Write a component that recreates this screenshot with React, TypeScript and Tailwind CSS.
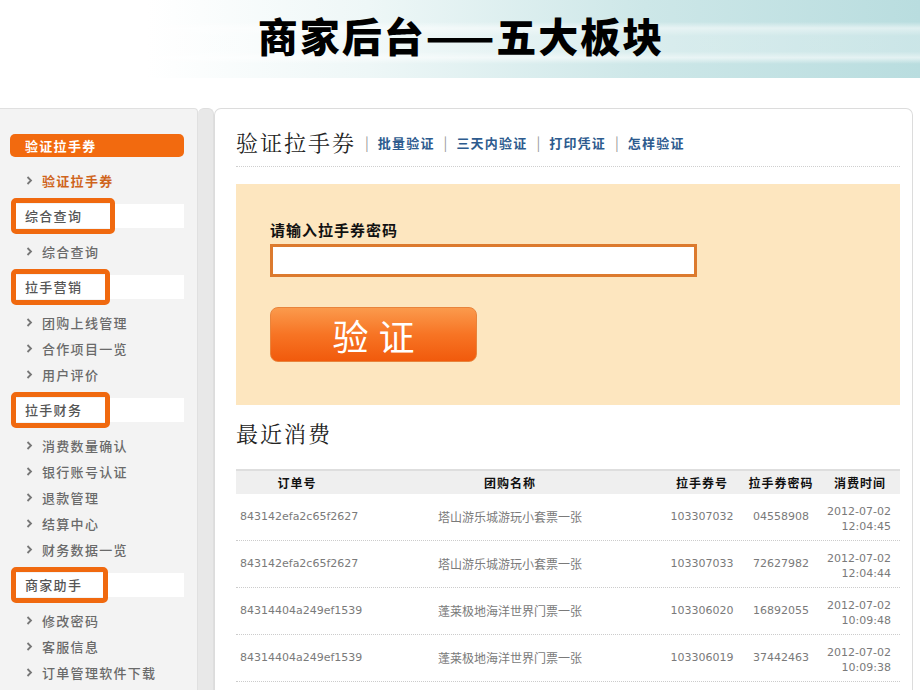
import React from "react";

const CJK = "font-['Noto_Sans_CJK_SC','Noto_Sans',sans-serif]";
const SERIF = "font-['Noto_Serif_CJK_SC','Noto_Sans_CJK_SC',serif]";
const NUM = "font-['DejaVu_Sans','Noto_Sans_CJK_SC',sans-serif]";

function Chevron() {
  return (
    <svg width="7" height="9" viewBox="0 0 7 9" className="shrink-0">
      <path d="M1.5 1 L5 4.5 L1.5 8" fill="none" stroke="#777" strokeWidth="1.8" />
    </svg>
  );
}

function Item({ label, active }: { label: string; active?: boolean }) {
  return (
    <div className="h-[26px] flex items-center pl-[26px] gap-[9px]">
      <Chevron />
      <span
        className={
          "text-[13px] tracking-[1.3px] leading-none " +
          (active ? "text-[#cf641c] font-bold" : "text-[#6a6a6a] font-medium")
        }
      >
        {label}
      </span>
    </div>
  );
}

function Section({ label, boxW }: { label: string; boxW: number }) {
  return (
    <div className="h-[45px] relative flex items-center">
      <div className="ml-[12px] w-[172px] h-[24px] bg-white flex items-center pl-[13px]">
        <span className="text-[13px] tracking-[1.3px] text-[#555] font-medium leading-none">{label}</span>
      </div>
      <div
        className="absolute left-[11px] top-[5px] h-[36px] border-[5px] border-[#f0690f] rounded-[5px]"
        style={{ width: boxW }}
      />
    </div>
  );
}

const rows = [
  ["843142efa2c65f2627", "塔山游乐城游玩小套票一张", "103307032", "04558908", "2012-07-02", "12:04:45"],
  ["843142efa2c65f2627", "塔山游乐城游玩小套票一张", "103307033", "72627982", "2012-07-02", "12:04:44"],
  ["84314404a249ef1539", "蓬莱极地海洋世界门票一张", "103306020", "16892055", "2012-07-02", "10:09:48"],
  ["84314404a249ef1539", "蓬莱极地海洋世界门票一张", "103306019", "37442463", "2012-07-02", "10:09:38"],
];

const cols = "grid grid-cols-[122px_304px_80px_78px_80px]";

export default function App() {
  return (
    <div className={"w-[920px] h-[690px] overflow-hidden bg-white " + CJK}>
      <header className="h-[78px] flex items-center justify-center pb-[8px] bg-[linear-gradient(to_bottom,rgba(255,255,255,0)_0%,rgba(255,255,255,0)_28%,rgba(255,255,255,0.55)_36%,rgba(255,255,255,0.25)_46%,rgba(255,255,255,0.25)_66%,rgba(255,255,255,0.6)_74%,rgba(255,255,255,0)_82%),linear-gradient(to_right,#ffffff_0%,#ffffff_16%,#eef7f7_40%,#cde7e8_70%,#b9dddf_100%)]">
        <h1 className="text-[40px] font-black text-black leading-none tracking-[2px] pl-[2px]">商家后台——五大板块</h1>
      </header>
      <div className="h-[30px]" />
      <div className="flex h-[582px]">
        <aside className="w-[198px] bg-[#f3f3f3] border-t border-r border-[#e0e0e0] rounded-tr-[4px] pt-[14px]">
          <div className="h-[44px] flex items-center">
            <div className="ml-[10px] w-[174px] h-[23px] bg-[#f26a0f] rounded-[5px] flex items-center pl-[15px]">
              <span className="text-[13px] tracking-[1.3px] text-white font-bold leading-none">验证拉手券</span>
            </div>
          </div>
          <Item label="验证拉手券" active />
          <Section label="综合查询" boxW={104} />
          <Item label="综合查询" />
          <Section label="拉手营销" boxW={99} />
          <Item label="团购上线管理" />
          <Item label="合作项目一览" />
          <Item label="用户评价" />
          <Section label="拉手财务" boxW={99} />
          <Item label="消费数量确认" />
          <Item label="银行账号认证" />
          <Item label="退款管理" />
          <Item label="结算中心" />
          <Item label="财务数据一览" />
          <Section label="商家助手" boxW={97} />
          <Item label="修改密码" />
          <Item label="客服信息" />
          <Item label="订单管理软件下载" />
        </aside>
        <div className="w-[16px] bg-[#e8e8e8] border-t border-r border-[#dedede] rounded-t-[6px]" />
        <main className="w-[699px] bg-white border-t border-l border-r border-[#dcdcdc] rounded-t-[7px] pl-[21px] pr-[12px]">
          <div className="pt-[18px] pb-[9px] border-b border-dotted border-[#cfcfcf] w-[664px]">
            <div className="h-[30px] flex items-center">
              <span className={"text-[22px] tracking-[2px] text-[#222] leading-none " + SERIF}>验证拉手券</span>
              {["批量验证", "三天内验证", "打印凭证", "怎样验证"].map((t) => (
                <React.Fragment key={t}>
                  <span className="text-[#999] text-[14px] mx-[9px] leading-none">|</span>
                  <span className="text-[13px] tracking-[1.2px] font-bold text-[#2d5b8e] leading-none">{t}</span>
                </React.Fragment>
              ))}
            </div>
          </div>
          <div className="mt-[17px] w-[664px] h-[221px] bg-[#fde6bf] pl-[34px] pt-[36px]">
            <div className="h-[20px] flex items-center text-[15px] tracking-[1px] font-bold text-[#111]">请输入拉手券密码</div>
            <div className="mt-[4px] w-[427px] h-[33px] bg-white border-[3px] border-[#dc7a2e]" />
            <div className="mt-[30px] w-[207px] h-[55px] rounded-[8px] border border-[#e8843c] bg-[linear-gradient(to_bottom,#fb9a4c_0%,#f77424_50%,#f15a0c_100%)] flex items-center justify-center">
              <span className="text-[36px] tracking-[10px] pl-[10px] text-white leading-none font-normal">验证</span>
            </div>
          </div>
          <div className="mt-[13px] h-[30px] flex items-center">
            <span className={"text-[22px] tracking-[2px] text-[#222] leading-none " + SERIF}>最近消费</span>
          </div>
          <div className="mt-[21px] w-[664px]">
            <div className={cols + " h-[25px] bg-[#efefef] border-t-2 border-[#dedede] items-center text-[12px] tracking-[1px] font-bold text-[#111]"}>
              <div className="text-center">订单号</div>
              <div className="text-center">团购名称</div>
              <div className="text-center">拉手券号</div>
              <div className="text-center">拉手券密码</div>
              <div className="text-center">消费时间</div>
            </div>
            {rows.map((r, i) => (
              <div key={i} className={cols + " h-[47px] items-center border-b border-dotted border-[#cccccc] text-[#7a7a7a]"}>
                <div className={"pl-[4px] text-[11px] " + NUM}>{r[0]}</div>
                <div className="text-center text-[12px]">{r[1]}</div>
                <div className={"text-center text-[11px] " + NUM}>{r[2]}</div>
                <div className={"text-center text-[11px] " + NUM}>{r[3]}</div>
                <div className={"text-right pr-[9px] text-[11px] leading-[15px] pt-[3px] " + NUM}>
                  <div>{r[4]}</div>
                  <div>{r[5]}</div>
                </div>
              </div>
            ))}
          </div>
        </main>
      </div>
    </div>
  );
}
